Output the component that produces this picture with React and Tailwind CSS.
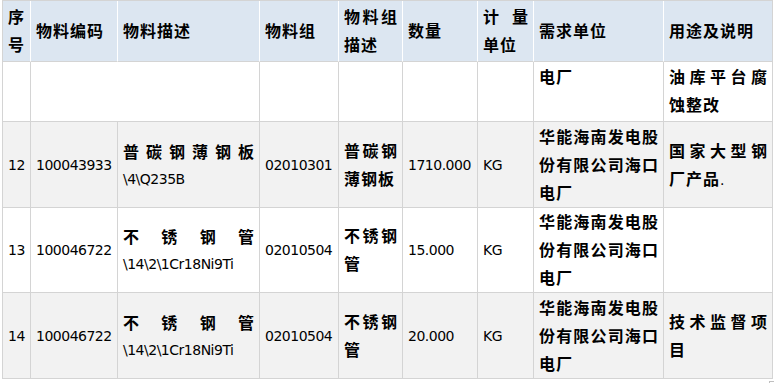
const CJK = /([\u3000-\u303f\u4e00-\u9fff\uff00-\uffef]+)/;

function Txt({ s }) {
  if (!s) return null;
  return s.split(CJK).filter(Boolean).map((part, i) =>
    CJK.test(part) ? (
      <span key={i} className="text-[16px] tracking-[1px] font-bold font-['Noto_Sans_CJK_SC',sans-serif]">
        {part}
      </span>
    ) : (
      <span key={i} className="text-[14px] tracking-[-0.5px]">
        {part}
      </span>
    )
  );
}

const widths = [28, 87, 142, 79, 64, 75, 56, 130, 109];

const headers = ["序号", "物料编码", "物料描述", "物料组", "物料组描述", "数量", "计量单位", "需求单位", "用途及说明"];

const rows = [
  {
    h: "h-[60px]",
    bg: "bg-white",
    top: true,
    cells: ["", "", "", "", "", "", "", "电厂", "油库平台腐蚀整改"],
  },
  {
    h: "h-[86px]",
    bg: "bg-[#f2f2f2]",
    cells: ["12", "100043933", "普碳钢薄钢板\\4\\Q235B", "02010301", "普碳钢薄钢板", "1710.000", "KG", "华能海南发电股份有限公司海口电厂", "国家大型钢厂产品."],
  },
  {
    h: "h-[85px]",
    bg: "bg-white",
    cells: ["13", "100046722", "不锈钢管\\14\\2\\1Cr18Ni9Ti", "02010504", "不锈钢管", "15.000", "KG", "华能海南发电股份有限公司海口电厂", ""],
  },
  {
    h: "h-[86px]",
    bg: "bg-[#f2f2f2]",
    cells: ["14", "100046722", "不锈钢管\\14\\2\\1Cr18Ni9Ti", "02010504", "不锈钢管", "20.000", "KG", "华能海南发电股份有限公司海口电厂", "技术监督项目"],
  },
];

export default function App() {
  return (
    <div className="w-[774px] h-[383px] bg-white pl-[2px] overflow-hidden text-black font-['DejaVu_Sans','Noto_Sans_CJK_SC',sans-serif]">
      <table className="table-fixed w-[771px] border-separate border-spacing-0 border-l border-t border-[#d4d4d4]">
        <colgroup>
          {widths.map((w, i) => (
            <col key={i} style={{ width: w }} />
          ))}
        </colgroup>
        <thead>
          <tr>
            {headers.map((t, i) => (
              <th
                key={i}
                className={`h-[61px] bg-[#dce6f1] border-b border-b-[#d4d4d4] border-r ${
                  i === headers.length - 1 ? "border-r-[#d4d4d4]" : "border-r-white"
                } pl-[5px] pr-[4px] align-middle font-normal leading-[26px] text-justify`}
              >
                <Txt s={t} />
              </th>
            ))}
          </tr>
        </thead>
        <tbody>
          {rows.map((r, ri) => (
            <tr key={ri}>
              {r.cells.map((c, ci) => (
                <td
                  key={ci}
                  className={`${r.h} ${r.bg} border-b border-[#d4d4d4] ${
                    ri === 0 && ci === 1 ? "border-r-0" : "border-r"
                  } pl-[5px] pr-[4px] ${
                    r.top ? "align-top pt-px" : "align-middle"
                  } leading-[26px] text-justify break-words`}
                >
                  <Txt s={c} />
                </td>
              ))}
            </tr>
          ))}
        </tbody>
      </table>
      <div className="ml-[767px] mt-[2px] w-[5px] h-[3px] border-l border-t border-[#bfbfbf]" />
    </div>
  );
}
